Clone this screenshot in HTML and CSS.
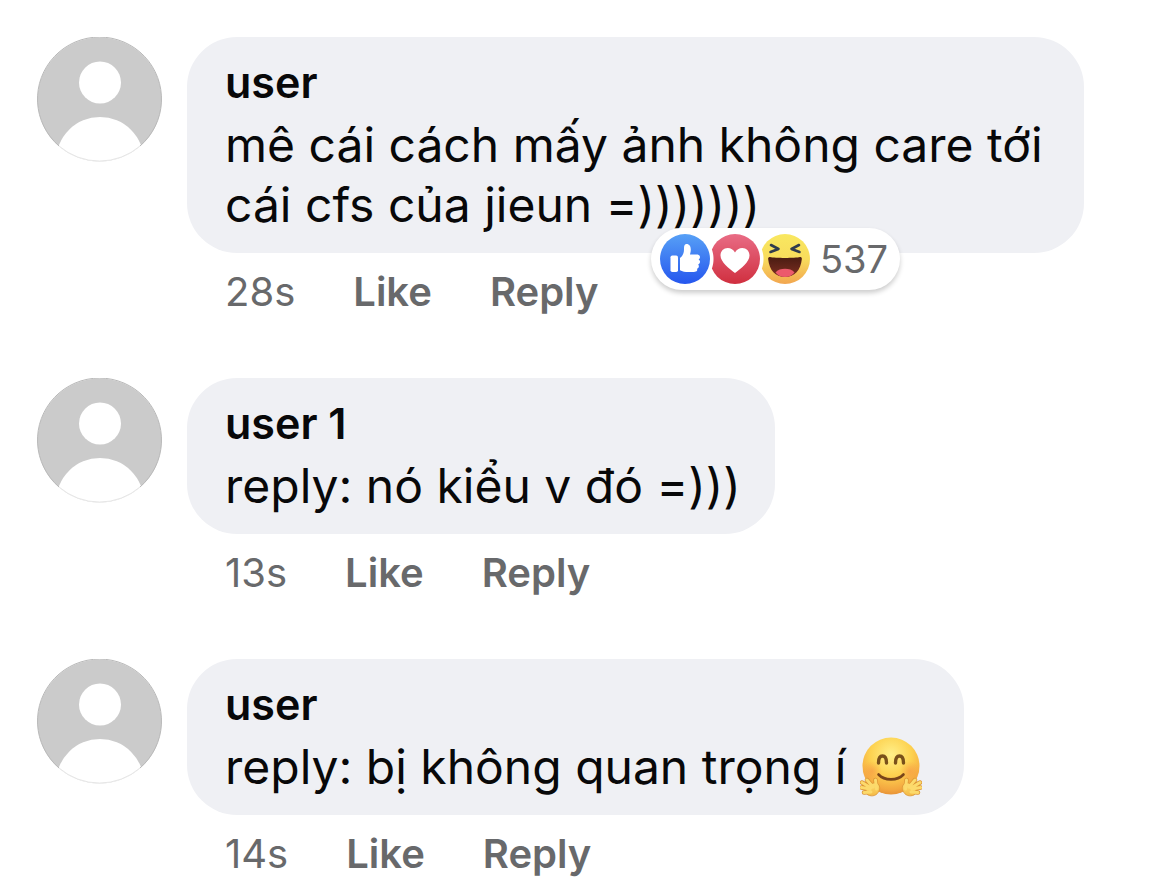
FILE: index.html
```html
<!DOCTYPE html>
<html lang="vi">
<head>
<meta charset="utf-8">
<meta name="viewport" content="width=device-width, initial-scale=1">
<title>Comments</title>
<link rel="stylesheet" href="styles.css">
</head>
<body>
<svg class="defs" width="0" height="0" aria-hidden="true">
  <defs>
    <linearGradient id="blue" x1="0" y1="0" x2="0" y2="1"><stop offset="0" stop-color="#57a0f6"/><stop offset="1" stop-color="#2556ee"/></linearGradient>
    <linearGradient id="red" x1="0" y1="0" x2="0" y2="1"><stop offset="0" stop-color="#e96c85"/><stop offset="1" stop-color="#d02f3f"/></linearGradient>
    <linearGradient id="yellow" x1="0" y1="0" x2="0" y2="1"><stop offset="0" stop-color="#f9e860"/><stop offset=".5" stop-color="#f8dc5c"/><stop offset="1" stop-color="#f2a650"/></linearGradient>
    <linearGradient id="mouth" x1="0" y1="0" x2="0" y2="1"><stop offset="0" stop-color="#4a1c12"/><stop offset="1" stop-color="#7d2f22"/></linearGradient>
    <radialGradient id="face" cx=".5" cy=".3" r=".72"><stop offset="0" stop-color="#fff08a"/><stop offset=".5" stop-color="#fdd250"/><stop offset=".85" stop-color="#f4a840"/><stop offset="1" stop-color="#e58f35"/></radialGradient>
    <radialGradient id="blush"><stop offset="0" stop-color="#f78c45" stop-opacity=".5"/><stop offset="1" stop-color="#f78c45" stop-opacity="0"/></radialGradient>
    <linearGradient id="hand" x1="0" y1="0" x2="0" y2="1"><stop offset="0" stop-color="#fddf72"/><stop offset="1" stop-color="#f4b944"/></linearGradient>
    <symbol id="avatar" viewBox="0 0 125 125">
      <clipPath id="round"><circle cx="62.500" cy="62.500" r="62"/></clipPath>
      <g clip-path="url(#round)">
        <rect width="125" height="125" fill="#cbcbcb"/>
        <circle cx="63" cy="45.500" r="21" fill="#fff"/>
        <circle cx="63" cy="124" r="44" fill="#fff"/>
      </g>
      <path d="M22 109A62 62 0 1 1 103 109" fill="none" stroke="#b9b9b9"/>
      <path d="M22 109A62 62 0 0 0 103 109" fill="none" stroke="#e6e6e6"/>
    </symbol>
  </defs>
</svg>
<main class="thread">
  <article class="comment">
    <svg class="avatar" role="img" aria-label="user"><use href="#avatar"/></svg>
    <div class="content">
      <div class="bubble">
        <h2 class="name">user</h2>
        <p class="text">mê cái cách mấy ảnh không care tới cái cfs của jieun =)))))))</p>
        <button class="reactions" type="button">
          <span class="icons">
            <svg class="reaction" viewBox="0 0 50 50" role="img" aria-label="Like">
              <circle cx="25" cy="25" r="25" fill="url(#blue)"/>
              <rect x="10.500" y="21.500" width="7.500" height="16.500" rx="1.800" fill="#fff"/>
              <path d="M20 24c2.800-2.200 4-5 4-8.500-.1-3.200.3-5.200 2.100-5.500 2.800-.4 4.700 2 4.700 5.500 0 2-.4 3.500-.8 5h6.800c2 0 3.200 1.100 3.200 2.600 0 1.300-.6 2-1.400 2.500 1 .6 1.500 1.400 1.400 2.500-.1 1.200-.8 2-1.800 2.400.5.600.8 1.400.6 2.300-.2 1-.9 1.700-1.800 2 .3.700.3 1.300.1 1.800-.5 1-1.600 1.400-3.200 1.400h-5c-3.800 0-6.600-.5-8.900-1.800z" fill="#fff"/>
            </svg>
            <svg class="reaction notched" viewBox="0 0 50 50" role="img" aria-label="Love">
              <circle cx="25" cy="25" r="25" fill="url(#red)"/>
              <path d="M25 39C19 34.500 10.500 28 10.500 21.500c0-4.400 3.200-7.500 7.200-7.500 3.200 0 5.700 1.600 7.300 4.500 1.600-2.900 4.100-4.500 7.300-4.500 4 0 7.200 3.100 7.200 7.500C39.500 28 31 34.500 25 39z" fill="#fff"/>
            </svg>
            <svg class="reaction notched" viewBox="0 0 50 50" role="img" aria-label="Haha">
              <circle cx="25" cy="25" r="25" fill="url(#yellow)"/>
              <path d="M11 11l7.500 4-8 3M39 11l-7.500 4 8 3" fill="none" stroke="#313c4d" stroke-width="2.600" stroke-linecap="round" stroke-linejoin="round"/>
              <path d="M10 23c5 1.200 25 1.200 30 0 1.500-.2 2 .8 1.800 2.200C40.800 36 34.500 43 25 43S9.200 36 8.200 25.200C8 23.800 8.500 22.800 10 23z" fill="url(#mouth)"/>
              <path d="M15.500 38.500c2-2.700 5.800-3.700 9.500-3.700s7.500 1 9.500 3.700C32 41.500 28.800 43 25 43s-7-1.500-9.500-4.500z" fill="#ec5a6c"/>
            </svg>
          </span>
          <span class="count">537</span>
        </button>
      </div>
      <div class="actions">
        <time class="time">28s</time>
        <button class="action" type="button">Like</button>
        <button class="action" type="button">Reply</button>
      </div>
    </div>
  </article>

  <article class="comment">
    <svg class="avatar" role="img" aria-label="user 1"><use href="#avatar"/></svg>
    <div class="content">
      <div class="bubble">
        <h2 class="name">user 1</h2>
        <p class="text">reply: nó kiểu v đó =)))</p>
      </div>
      <div class="actions">
        <time class="time">13s</time>
        <button class="action" type="button">Like</button>
        <button class="action" type="button">Reply</button>
      </div>
    </div>
  </article>

  <article class="comment">
    <svg class="avatar" role="img" aria-label="user"><use href="#avatar"/></svg>
    <div class="content">
      <div class="bubble">
        <h2 class="name">user</h2>
        <p class="text">reply: bị không quan trọng í <svg class="emoji" viewBox="0 0 62 60" role="img" aria-label="Hugging face">
          <circle cx="31" cy="29" r="28.500" fill="url(#face)"/>
          <circle cx="12" cy="34" r="10" fill="url(#blush)"/>
          <circle cx="50" cy="34" r="10" fill="url(#blush)"/>
          <path d="M18.500 26c0-5 1.600-7 4-7s4 2 4 7M35.500 26c0-5 1.600-7 4-7s4 2 4 7" fill="none" stroke="#79501a" stroke-width="3.400" stroke-linecap="round"/>
          <path d="M18.500 37.500c6 6.500 19 6.500 25 0" fill="none" stroke="#79451a" stroke-width="2.600" stroke-linecap="round"/>
          <g id="hug-hand">
            <path d="M10 55L4 55.500M9 52L1.500 50.500M10 50L2 45.500M12 49L7 43M16.500 52L15.500 43" fill="none" stroke="#dc9433" stroke-width="4.400" stroke-linecap="round"/>
            <path d="M8 50c2-3 5-4.500 8-4 3.500 1 4.500 4.500 3 8-2 4.500-6.500 6-11 4C5.500 56.500 5.500 53 8 50z" fill="url(#hand)" stroke="#dc9433" stroke-width=".8"/>
            <path d="M11 55L4 55.500M10 52L1.500 50.500M11 51L2 45.500M13 50L7 43M16.500 52L15.500 43" fill="none" stroke="#fcda6c" stroke-width="3" stroke-linecap="round"/>
          </g>
          <use href="#hug-hand" transform="translate(62 0) scale(-1 1)"/>
        </svg></p>
      </div>
      <div class="actions">
        <time class="time">14s</time>
        <button class="action" type="button">Like</button>
        <button class="action" type="button">Reply</button>
      </div>
    </div>
  </article>
</main>
</body>
</html>
```
FILE: styles.css
```css
* { box-sizing: border-box; }

body {
  margin: 0;
  background: #fff;
  color: #080809;
  font-family: Inter, "Liberation Sans", sans-serif;
}

.defs { position: absolute; }

.thread {
  display: flex;
  flex-direction: column;
  gap: 61px;
  padding: 37px 86px 0 37px;
}

.comment {
  display: flex;
  align-items: flex-start;
  gap: 25px;
}

.avatar {
  flex: none;
  width: 125px;
  height: 125px;
}

.content {
  flex: 1;
  min-width: 0;
  display: flex;
  flex-direction: column;
  align-items: flex-start;
  gap: 14px;
}

.bubble {
  position: relative;
  display: flex;
  flex-direction: column;
  gap: 8px;
  padding: 20px 34px 18px 38px;
  border-radius: 50px;
  background: #eff0f4;
}

.name {
  margin: 0;
  font-size: 43px;
  font-weight: 600;
  line-height: 50px;
}

.text {
  margin: 0;
  font-size: 48px;
  line-height: 60px;
}

.emoji {
  width: 62px;
  height: 60px;
  margin-right: 8px;
  vertical-align: top;
}

.reactions {
  position: absolute;
  right: 184px;
  bottom: -37px;
  display: flex;
  align-items: center;
  gap: 10px;
  height: 62px;
  padding: 0 12px 0 9px;
  border: 0;
  border-radius: 31px;
  background: #fff;
  box-shadow: 0 3px 5px rgba(0, 0, 0, 0.2);
  color: #68696b;
  font: inherit;
}

.icons { display: flex; }

.reaction {
  width: 50px;
  height: 50px;
}

.notched {
  -webkit-mask: radial-gradient(circle at -25px 25px, transparent 28px, #000 29px);
  mask: radial-gradient(circle at -25px 25px, transparent 28px, #000 29px);
}

.count {
  font-size: 38px;
  line-height: 50px;
}

.actions {
  display: flex;
  gap: 58px;
  padding-left: 38px;
  color: #68696b;
  font-size: 40px;
  line-height: 50px;
}

.action {
  padding: 0;
  border: 0;
  background: none;
  color: inherit;
  font: inherit;
  font-weight: 600;
}
```
